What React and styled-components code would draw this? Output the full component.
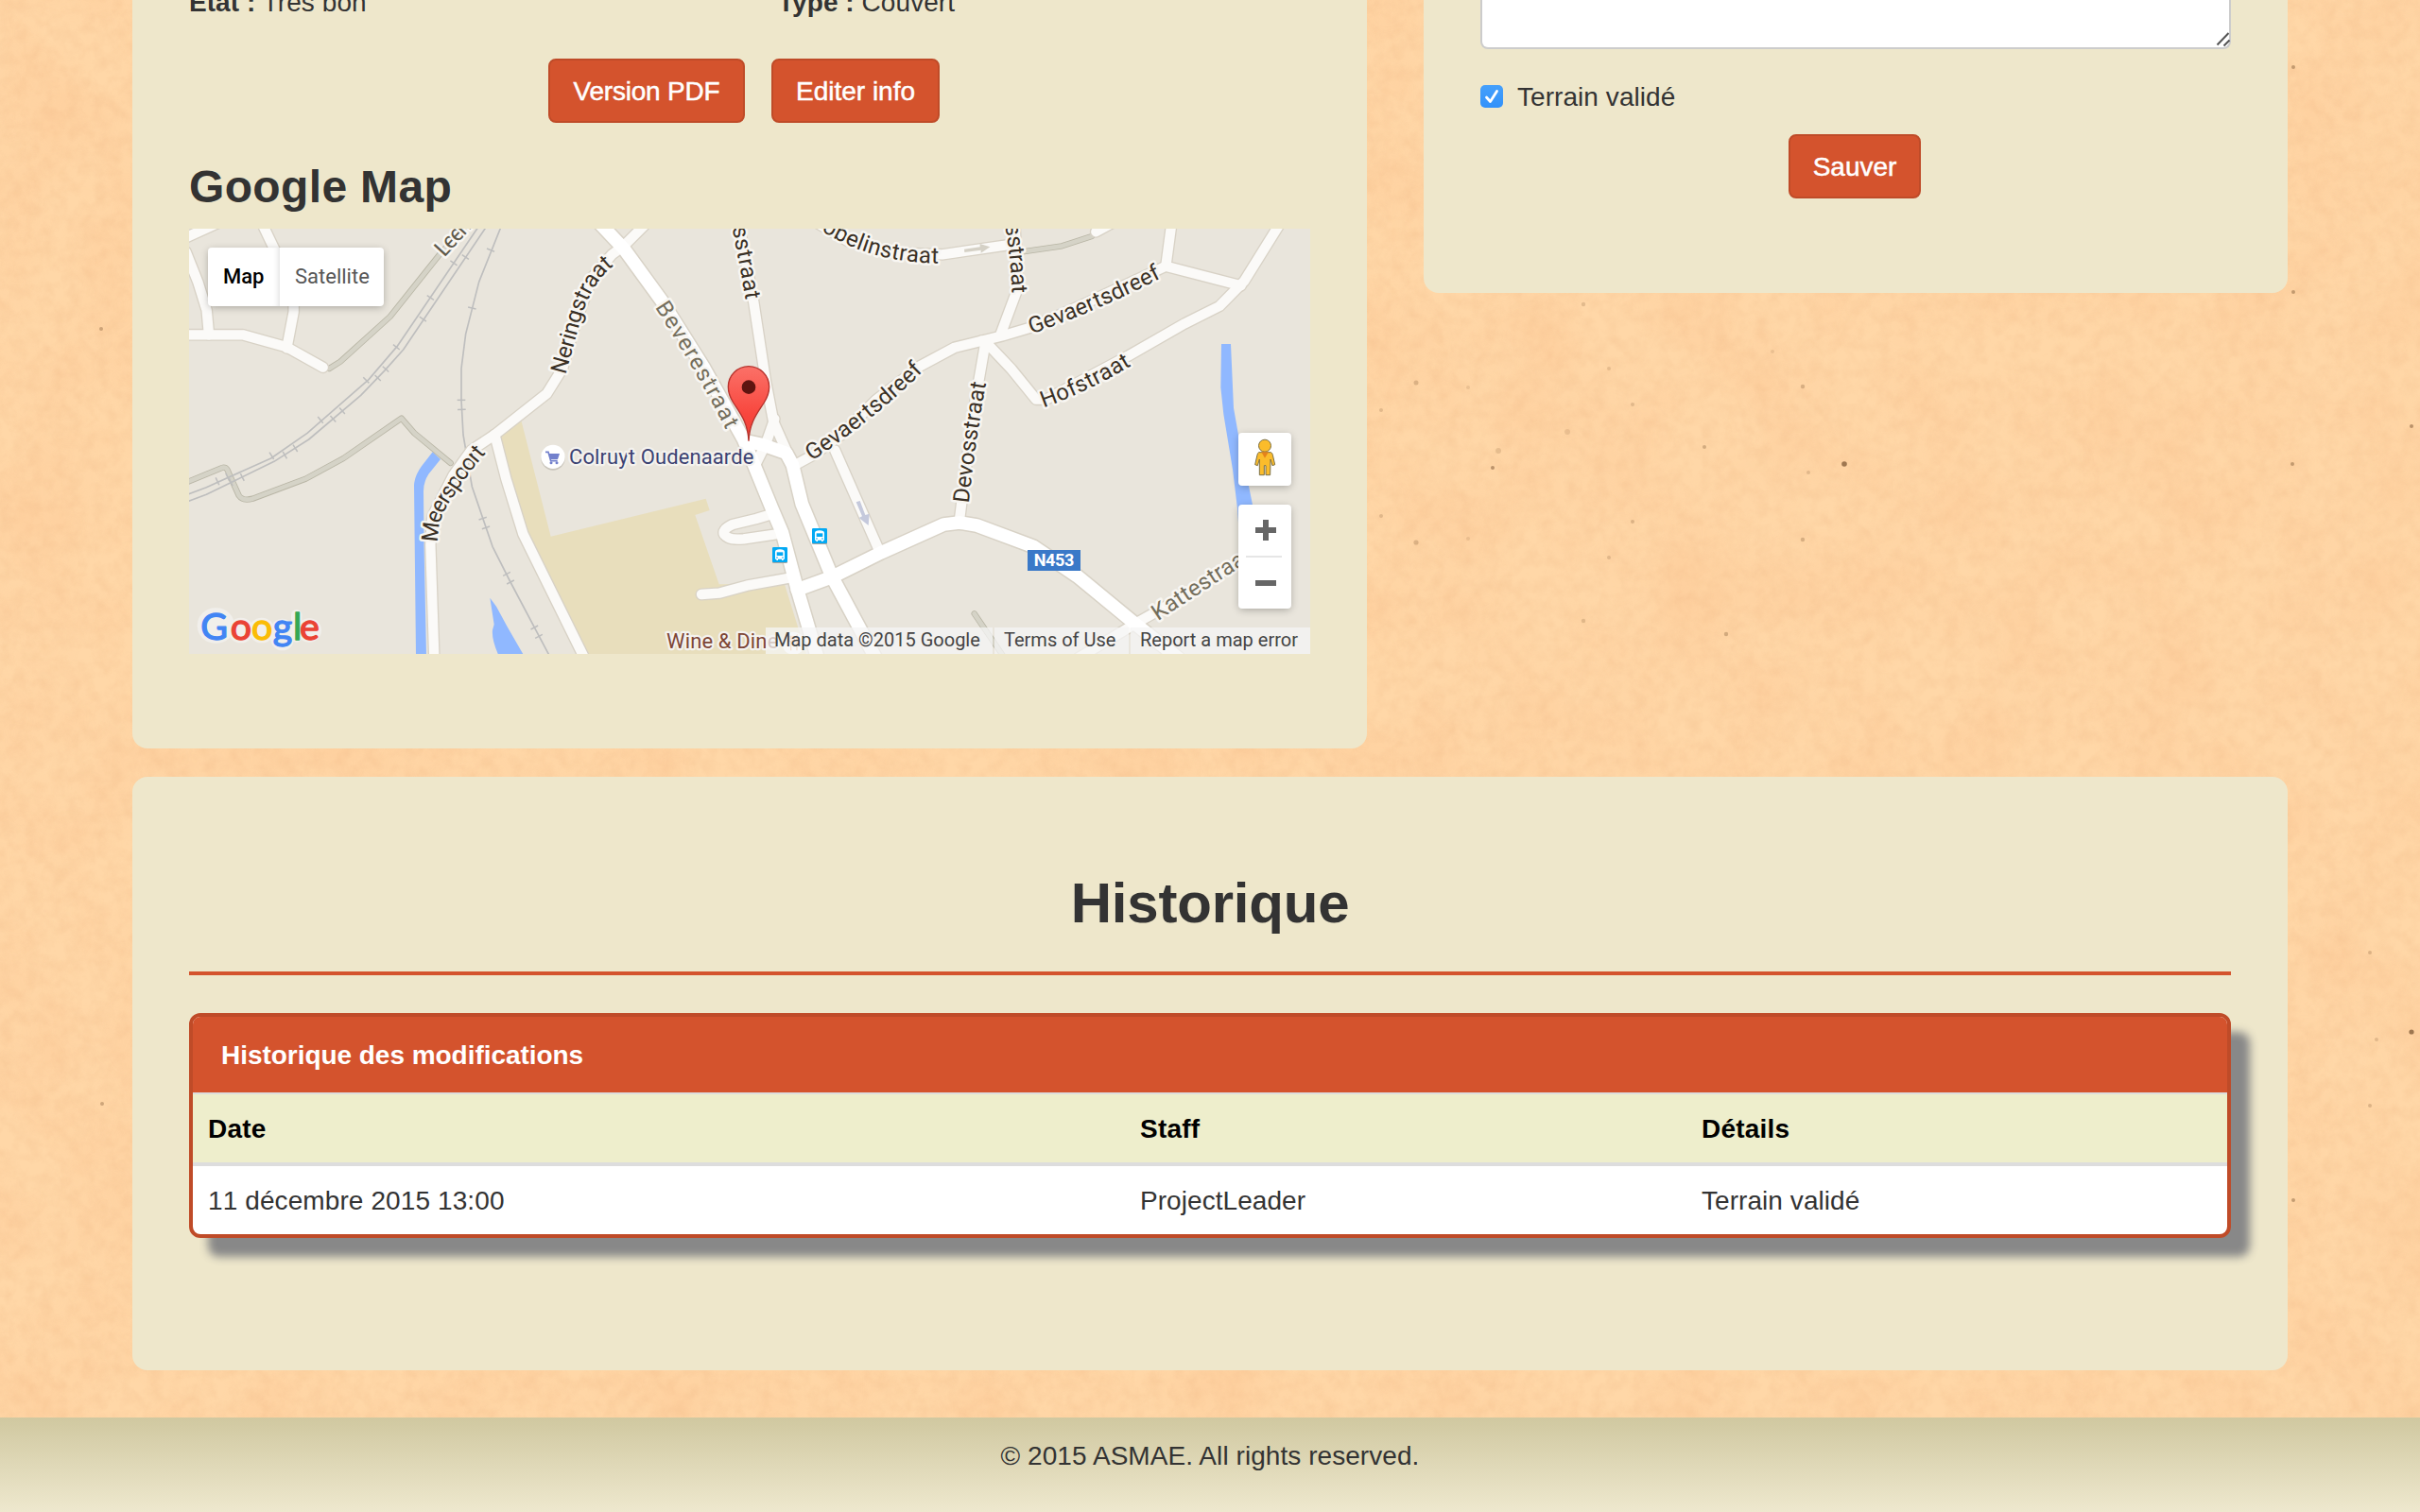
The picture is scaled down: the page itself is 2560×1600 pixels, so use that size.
import React from 'react';
import styled, { createGlobalStyle, css } from 'styled-components';

const Global = createGlobalStyle`
  *, *::before, *::after { box-sizing: border-box; }
  body {
    margin: 0;
    background: #ffd7a7;
    color: #333;
    font: 28px/40px "Helvetica Neue", "Liberation Sans", Arial, sans-serif;
    letter-spacing: 0.06px;
  }
`;

const Page = styled.div`
  position: relative;
  display: flex;
  flex-direction: column;
  width: 2560px;
  height: 1600px;
  overflow: hidden;
`;

const PaperTexture = styled.svg`
  position: absolute;
  inset: 0;
  z-index: -1;
  width: 2560px;
  height: 1600px;
`;

const Container = styled.main`
  display: flex;
  flex-direction: column;
  gap: 30px;
  flex: 1;
  padding: 0 140px;
`;

const Columns = styled.div`
  display: flex;
  align-items: flex-start;
  gap: 60px;
`;

const Panel = styled.section`
  background: #eee7cb;
  border-radius: ${(p) => (p.$cut ? '0 0 16px 16px' : '16px')};
  padding: 0 60px;
  width: ${(p) => p.$width}px;
  height: ${(p) => p.$height}px;
`;

const InfoRow = styled.div`
  display: grid;
  grid-template-columns: 623px 1fr;
  margin-top: -17px;
`;

const Buttons = styled.div`
  display: flex;
  justify-content: center;
  gap: 28px;
  padding-right: ${(p) => p.$trail || 0}px;
  margin-top: ${(p) => p.$top}px;
`;

const Button = styled.button`
  width: ${(p) => p.$width}px;
  height: 68px;
  padding: 2px 0 0;
  font: inherit;
  letter-spacing: ${(p) => p.$tracking || 0}px;
  white-space: nowrap;
  color: #fff;
  -webkit-text-stroke: 0.5px #fff;
  background: #d4532d;
  border: 2px solid #bf4b28;
  border-radius: 8px;
`;

const SubTitle = styled.h3`
  margin: 40px 0 16px;
  font-size: 48px;
  line-height: 56px;
  letter-spacing: 0.35px;
`;

const MapFrame = styled.div`
  position: relative;
  width: 1186px;
  height: 450px;
  overflow: hidden;
  background: #e9e5dc;
  font-family: Roboto, sans-serif;
  letter-spacing: 0;
`;

const MapDrawing = styled.svg`
  display: block;
  width: 1186px;
  height: 450px;
`;

const floating = css`
  position: absolute;
  background: #fff;
  border-radius: 4px;
  box-shadow: 0 2px 8px -1px rgba(0, 0, 0, 0.3);
`;

const MapTypes = styled.div`
  ${floating}
  display: flex;
  left: 20px;
  top: 20px;
  height: 62px;
  line-height: 62px;
  font-size: 22px;
`;

const MapType = styled.div`
  width: ${(p) => p.$width}px;
  padding-left: 16px;
  color: ${(p) => (p.$active ? '#000' : '#565656')};
  font-weight: ${(p) => (p.$active ? 500 : 400)};
  box-shadow: ${(p) => (p.$active ? 'inset -6px 0 6px -5px rgba(0,0,0,.15)' : 'none')};
`;

const StreetView = styled.div`
  ${floating}
  right: 20px;
  top: 216px;
  width: 56px;
  height: 56px;
`;

const ZoomControl = styled.div`
  ${floating}
  right: 20px;
  top: 292px;
  width: 56px;
  height: 110px;
`;

const Attribution = styled.div`
  position: absolute;
  right: 0;
  bottom: 0;
  display: flex;
  gap: 2px;
  height: 28px;
  font-size: 20px;
  line-height: 27px;
  color: #444;
`;

const Credit = styled.span`
  width: ${(p) => p.$width}px;
  padding-left: ${(p) => p.$pad}px;
  white-space: nowrap;
  background: rgba(245, 245, 245, 0.74);
`;

const TextArea = styled.div`
  position: relative;
  height: 52px;
  background: #fff;
  border: 2px solid #ccc;
  border-top: 0;
  border-radius: 0 0 8px 8px;
`;

const Grip = styled.svg`
  position: absolute;
  right: -2px;
  bottom: 0;
  width: 18px;
  height: 18px;
`;

const CheckLabel = styled.label`
  display: flex;
  align-items: center;
  gap: 15px;
  height: 40px;
  margin-top: 30px;
`;

const CheckText = styled.span`
  padding-top: 1px;
`;

const Tick = styled.span`
  display: flex;
  width: 24px;
  height: 24px;
  border-radius: 5px;
  background: linear-gradient(#45a0fb, #3191fa);
`;

const Title = styled.h1`
  margin: 0;
  padding-top: 98px;
  height: 210px;
  border-bottom: 4px solid #d4532d;
  font-size: 60px;
  line-height: 72px;
  letter-spacing: -0.2px;
  text-align: center;
`;

const History = styled.div`
  margin-top: 40px;
  height: 238px;
  border: 4px solid #bf4b28;
  border-radius: 12px;
  background: #fff;
  box-shadow: 20px 20px 10px #888;
  overflow: hidden;
`;

const HistoryHead = styled.div`
  height: 80px;
  padding: 21px 30px 0;
  background: #d4532d;
  color: #fff;
  font-weight: bold;
  letter-spacing: -0.04px;
`;

const Row = styled.div`
  display: grid;
  grid-template-columns: 986px 594px 1fr;
  padding: 17px 16px 0;
  height: ${(p) => (p.$head ? 78 : 72)}px;
  ${(p) =>
    p.$head &&
    css`
      background: #eeeecc;
      border-top: 2px solid #ddd;
      border-bottom: 4px solid #ddd;
      color: #000;
      font-weight: bold;
      letter-spacing: 0.2px;
    `}
`;

const DateCell = styled.span`
  font-kerning: none;
  letter-spacing: 0.1px;
`;

const Footer = styled.footer`
  height: 100px;
  padding-top: 21px;
  text-align: center;
  background: linear-gradient(#d0c8a0, #eee8ce);
`;

/* Map geometry: three drawing units per pixel. */
const minor = [
  'M-20 82L130 14',
  'M262 20L305 110L362 265L362 300L340 415',
  'M20 110L58 205L86 295L93 373',
  'M10 373H200L340 412L455 476',
  'M808 1400L796 1040L802 950L868 820L925 740L1000 690L1165 560L1215 480L1258 330L1310 190L1372 118L1410 90L1475 25',
  'M1000 690L1036 830L1090 1005L1290 1410',
  'M1775 20L1822 270L1860 520L1885 650L1930 750',
  'M1888 640L1860 720L1825 790',
  'M1955 785L2010 755L2100 690L2210 580L2350 472L2460 413L2612 376L2700 350L2860 280L3130 155L3368 217',
  'M3130 155L3148 20',
  'M3492 20L3378 203L3300 282L3190 337L3010 440L2750 578L2718 578L2640 482L2570 408L2545 392',
  'M2650 10L2660 225L2606 370',
  'M2010 10L2120 75L2250 112L2420 118L2655 84',
  'M2908 46L3010 -10',
  'M2556 405L2515 640L2475 960',
  'M2080 740L2222 1062',
  'M1880 942L1830 957L1755 975Q1706 998 1742 1017Q1756 1024 1790 1021L1900 1005',
  'M1656 1197L1712 1193L1800 1169L1945 1143',
  'M2850 1400L3050 1280L3210 1190L3410 1060',
];
const major = [
  'M1325 10L1410 100L1530 265L1665 480L1790 705L1880 925L1912 1000L1960 1180L2025 1400',
  'M1805 712L1850 722L1925 748L1945 785L1975 910L2070 1140L2215 1410',
  'M1960 1182L2070 1142L2225 1065L2425 975L2475 969L2530 978L2710 1045L2850 1140L3020 1280L3170 1400',
];
const tracks = [
  'M475 480L510 458L668 315L830 112L960 -30',
  'M20 842L130 797Q148 786 156 812L188 883Q200 902 232 893L400 830L520 765L704 638L745 685L860 780',
  'M2670 110L2800 91L2895 60',
  'M2522 1258L2622 1405',
];
const rails = [
  'M955 20L690 410L600 515L405 685L290 765L85 857L20 882',
  'M980 20L710 420L650 487L575 565L410 705L300 775L85 880L20 904',
  'M1024 20L950 205L908 370L894 480L894 580L900 690L928 855L993 1045L1050 1158L1178 1400',
];
const ties = [
  [870, 145, -56], [796, 255, -56], [688, 412, -52], [592, 517, -45], [447, 643, -40], [292, 757, -32], [120, 838, -25],
  [907, 126, -56], [772, 323, -56], [654, 482, -48], [629, 510, -46], [516, 614, -42], [487, 640, -42], [367, 733, -33],
  [334, 755, -30], [199, 825, -26], [163, 841, -26], [152, 824, -26],
  [987, 104, -68], [928, 288, -76], [894, 580, 90], [895, 610, 89], [918, 800, 80], [962, 956, 72], [972, 985, 72],
  [1038, 1132, 63], [1050, 1158, 63], [1126, 1302, 62], [1140, 1330, 62],
];
const labels = [
  { id: 'leer', d: 'M840 128L1030 -80', t: 'Leenstraat', len: 275, c: '#5f594a' },
  { id: 'mee', d: 'M820 1032Q816 955 870 885Q905 825 974 746', t: 'Meerspoort', len: 330 },
  { id: 'ner', d: 'M1225 500L1266 350Q1300 210 1382 150', t: 'Neringstraat', len: 386 },
  { id: 'bev', d: 'M1508 285Q1635 480 1738 682', t: 'Beverestraat', len: 451, c: '#746e5c' },
  { id: 'oss', d: 'M1744 -8L1758 55Q1778 155 1798 272', t: 'osstraat', len: 276 },
  { id: 'obe', d: 'M2036 42Q2200 148 2428 146', t: 'obelinstraat', len: 392 },
  { id: 'sst', d: 'M2608 -12L2624 50Q2638 140 2642 246', t: 'osstraat', len: 256 },
  { id: 'gev1', d: 'M2006 774Q2220 630 2364 484', t: 'Gevaertsdreef', len: 456 },
  { id: 'gev2', d: 'M2703 370Q2900 303 3116 192', t: 'Gevaertsdreef', len: 450 },
  { id: 'hof', d: 'M2742 604Q2880 555 3025 468', t: 'Hofstraat', len: 310 },
  { id: 'dev', d: 'M2504 908Q2525 720 2560 520', t: 'Devosstraat', len: 386 },
  { id: 'kat', d: 'M3105 1282Q3270 1170 3450 1060', t: 'Kattestraat', len: 360, c: '#746e5c' },
];
const googleLetters = [
  ['G', 67, '#4285f4'], ['o', 161, '#ea4335'], ['o', 228, '#fbbc05'], ['g', 296, '#4285f4'], ['l', 360, '#34a853'], ['e', 381, '#ea4335'],
];
const googleHalo = [
  ['M112 1296h6', 112], ['M194 1311h1', 80], ['M260 1311h1', 80], ['M326 1311v27', 74], ['M371 1262v70', 34], ['M411 1311h1', 76],
];

/* Specks in the paper: x, y, radius, opacity. */
const specks = [
  [1951, 491, 2.8, 1], [2425, 491, 2, 0.6], [2551, 451, 2, 0.7], [2551, 1092, 2.6, 1], [2426, 71, 2, 0.6], [2426, 309, 2, 0.6],
  [1579, 495, 2, 0.7], [1498, 405, 2.5, 0.35], [1461, 434, 2, 0.3], [1675, 322, 2.2, 0.3], [1702, 390, 2, 0.25], [1727, 428, 2, 0.3],
  [1803, 473, 2, 0.45], [1907, 409, 2.2, 0.4], [1913, 500, 2, 0.3], [1461, 546, 2, 0.3], [1498, 574, 2.6, 0.35], [1727, 552, 2, 0.35],
  [1702, 590, 2, 0.3], [1907, 571, 2.2, 0.4], [1675, 657, 2.2, 0.3], [1826, 671, 2.2, 0.45], [1585, 477, 3, 0.25], [1658, 457, 3, 0.2],
  [1875, 372, 2, 0.2], [1553, 410, 2, 0.2], [1553, 570, 2, 0.2], [107, 348, 2, 0.5], [108, 1168, 2, 0.5],
  [2426, 1270, 2, 0.6], [2514, 1100, 2, 0.3], [2507, 1170, 2, 0.35], [2507, 1008, 2, 0.35],
];

function Bus({ x, y }) {
  return (
    <g transform={`translate(${x} ${y})`}>
      <rect y="3" width="48" height="48" rx="4" fill="#a9a69f" />
      <rect width="48" height="48" rx="4" fill="#03a9f4" />
      <path d="M9 38V15Q9 7 24 7Q39 7 39 15V38H35V42H30V38H18V42H13V38Z" fill="#fff" />
      <path d="M14 16H34V27H14Z" fill="#03a9f4" />
      <circle cx="15" cy="33" r="2.5" fill="#03a9f4" />
      <circle cx="33" cy="33" r="2.5" fill="#03a9f4" />
    </g>
  );
}

function StreetMap() {
  const all = (list, stroke, width, cap = 'round') =>
    list.map((d) => <path key={d + stroke} d={d} stroke={stroke} strokeWidth={width} strokeLinecap={cap} />);
  return (
    <MapDrawing viewBox="30 36 3558 1350">
      <defs>
        <linearGradient id="pin" x1="0" y1="0" x2="0" y2="1">
          <stop offset="0" stopColor="#fb7168" />
          <stop offset="0.65" stopColor="#f8463d" />
          <stop offset="1" stopColor="#ef4136" />
        </linearGradient>
        {labels.map((l) => <path key={l.id} id={l.id} d={l.d} />)}
      </defs>
      <path d="M1085 648L1178 1013L1670 893L1682 930L1636 945L1712 1165L1920 1165L1990 1390H1260L1080 1010L1000 700Z" fill="#e8debc" />
      <g fill="#90b8ff">
        <path d="M803 745L828 768L790 815Q774 840 774 870L776 1060L783 1390H750L744 850Q746 820 768 790Z" />
        <path d="M985 1208L1005 1235L1040 1300L1092 1390H1012Q990 1340 993 1310L998 1292Z" />
        <path d="M3306 402H3336L3345 605L3360 690L3405 912L3420 1000H3362L3357 925L3342 800L3313 625L3304 540Z" />
      </g>
      <g fill="none" strokeLinejoin="round">
        {all(tracks, '#b9b6a6', 19)}
        {all(tracks, '#d5d3c7', 14)}
        {all(rails, '#bebebe', 5, 'butt')}
        {ties.map(([x, y, a]) => (
          <path key={`${x}-${y}`} d="M0 -13V13" transform={`translate(${x} ${y}) rotate(${a})`} stroke="#bebebe" strokeWidth="4.5" />
        ))}
        {all(minor, '#d8d2c6', 39)}
        {all(major, '#d8d2c6', 50)}
        {all(minor, '#fbfaf8', 31)}
        {all(major, '#ffffff', 41)}
      </g>
      <path d="M2490 101L2540 94V84L2572 94L2543 113V104L2491 111Z" fill="#d5d1c6" />
      <path d="M2147 904L2159 900L2176 945L2189 941L2186 978L2156 954L2166 949Z" fill="#c5c9dc" />

      <g fontSize="72" strokeLinejoin="round">
        {labels.map((l) => (
          <text key={l.id} fill={l.c || '#3a3025'} stroke="#f8f6f2" strokeWidth="15" paintOrder="stroke">
            <textPath href={`#${l.id}`} textLength={l.len} lengthAdjust="spacing">{l.t}</textPath>
          </text>
        ))}
      </g>
      <rect x="2691" y="1056" width="168" height="66" fill="#3a79c8" />
      <text x="2711" y="1108" fontSize="54" fontWeight="700" fill="#fff" textLength="128">N453</text>

      <Bus x={2007} y={987} />
      <Bus x={1881} y={1047} />

      <circle cx="1185" cy="765" r="38" fill="#c8c4bb" />
      <circle cx="1185" cy="760" r="38" fill="#fff" />
      <path d="M1161 745H1170L1178 773H1199" fill="none" stroke="#7280cc" strokeWidth="5" />
      <path d="M1171 750H1206L1200 768H1177Z" fill="#7280cc" />
      <circle cx="1179" cy="779" r="4.5" fill="#7280cc" />
      <circle cx="1197" cy="779" r="4.5" fill="#7280cc" />
      <g fontSize="66" paintOrder="stroke" stroke="#f4f2ee" strokeWidth="13" strokeLinejoin="round">
        <text x="1236" y="783" fill="#3b4273" textLength="586">Colruyt Oudenaarde</text>
        <text x="1545" y="1367" fill="#7d4535" textLength="355">Wine &amp; Dine</text>
      </g>
      <circle cx="1948" cy="1352" r="36" fill="#fff" />
      <path d="M1934 1328V1345H1940V1375M1944 1328V1345M1939 1328V1340M1959 1375V1328L1951 1336V1352H1958" fill="none" stroke="#f29b5c" strokeWidth="4" />

      <path d="M1806 710C1803 650 1779 622 1757 588Q1741 563 1741 538A65 65 0 0 1 1871 538Q1871 563 1855 588C1833 622 1809 650 1806 710Z" fill="url(#pin)" stroke="#b5322c" strokeWidth="4" />
      <circle cx="1806" cy="539" r="22" fill="#5e1410" />

      <g stroke="#f1efeb" strokeLinecap="round">
        {googleHalo.map(([d, w]) => <path key={d} d={d} strokeWidth={w} />)}
      </g>
      <g fontFamily="Lato" fontSize="118" strokeWidth="4" strokeLinejoin="round">
        {googleLetters.map(([c, x, f]) => (
          <text key={x} x={x} y="1341" fill={f} stroke={f}>{c}</text>
        ))}
      </g>
    </MapDrawing>
  );
}

function Pegman() {
  return (
    <svg width="56" height="56" viewBox="0 0 168 168" fill="#fbbc2b" stroke="#7b7047" strokeWidth="3">
      <path d="M65 62H103Q108 64 109 70L116 101L108 104L102 84L101 134H87V104H82V134H67V84L61 104L53 101L60 70Q61 64 65 62Z" />
      <circle cx="84" cy="41" r="19.5" />
      <path d="M73 61H96L84 80Z" fill="#e4831b" stroke="none" />
    </svg>
  );
}

function Paper() {
  return (
    <PaperTexture>
      <defs>
        <filter id="grain" x="0" y="0" width="100%" height="100%" colorInterpolationFilters="sRGB">
          <feTurbulence type="fractalNoise" baseFrequency="0.07" numOctaves="3" seed="8" />
          <feColorMatrix values="0 0 0 0 0.9  0 0 0 0 0.66  0 0 0 0 0.46  0.9 0.5 0 0 -0.55" />
        </filter>
        <filter id="clouds" x="0" y="0" width="100%" height="100%" colorInterpolationFilters="sRGB">
          <feTurbulence type="fractalNoise" baseFrequency="0.012" numOctaves="3" seed="3" />
          <feColorMatrix values="0 0 0 0 0.99  0 0 0 0 0.78  0 0 0 0 0.58  1.5 0 0 0 -0.5" />
        </filter>
      </defs>
      <rect width="2560" height="1600" filter="url(#clouds)" opacity="0.5" />
      <rect width="2560" height="1600" filter="url(#grain)" opacity="0.3" />
      <g fill="#7d5836">
        {specks.map(([x, y, r, o]) => <circle key={`${x}-${y}`} cx={x} cy={y} r={r} opacity={o * 0.75} />)}
      </g>
    </PaperTexture>
  );
}

export default function App() {
  return (
    <Page>
      <Global />
      <Paper />
      <Container>
        <Columns>
          <Panel $cut $width={1306} $height={792}>
            <InfoRow>
              <span><b>Etat :</b> Très bon</span>
              <span><b>Type :</b> Couvert</span>
            </InfoRow>
            <Buttons $top={39} $trail={12}>
              <Button $width={208} $tracking={-0.2}>Version PDF</Button>
              <Button $width={178}>Editer info</Button>
            </Buttons>
            <SubTitle>Google Map</SubTitle>
            <MapFrame>
              <StreetMap />
              <MapTypes>
                <MapType $active $width={76}>Map</MapType>
                <MapType $width={110}>Satellite</MapType>
              </MapTypes>
              <StreetView><Pegman /></StreetView>
              <ZoomControl>
                <svg width="56" height="110" fill="#666">
                  <path d="M18 24H26V16H32V24H40V30H32V38H26V30H18ZM18 80H40V86H18Z" />
                  <path d="M8 54H46V56H8Z" fill="#e6e6e6" />
                </svg>
              </ZoomControl>
              <Attribution>
                <Credit $width={240} $pad={9}>Map data ©2015 Google</Credit>
                <Credit $width={142} $pad={10}>Terms of Use</Credit>
                <Credit $width={190} $pad={10}>Report a map error</Credit>
              </Attribution>
            </MapFrame>
          </Panel>
          <Panel $cut $width={914} $height={310}>
            <TextArea>
              <Grip viewBox="0 0 18 18">
                <path d="M3.5 15.5L15.5 3M10.5 16.5L16.5 10.5" stroke="#555" strokeWidth="2" />
              </Grip>
            </TextArea>
            <CheckLabel>
              <Tick>
                <svg width="24" height="24" fill="none" stroke="#fff" strokeWidth="2.8" strokeLinecap="round" strokeLinejoin="round">
                  <path d="M6.5 13L10.5 17.5L17.5 6.5" />
                </svg>
              </Tick>
              <CheckText>Terrain validé</CheckText>
            </CheckLabel>
            <Buttons $top={20} $trail={2}>
              <Button $width={140}>Sauver</Button>
            </Buttons>
          </Panel>
        </Columns>
        <Panel $width={2280} $height={628}>
          <Title>Historique</Title>
          <History>
            <HistoryHead>Historique des modifications</HistoryHead>
            <Row $head>
              <span>Date</span><span>Staff</span><span>Détails</span>
            </Row>
            <Row>
              <DateCell>11 décembre 2015 13:00</DateCell><span>ProjectLeader</span><span>Terrain validé</span>
            </Row>
          </History>
        </Panel>
      </Container>
      <Footer>© 2015 ASMAE. All rights reserved.</Footer>
    </Page>
  );
}
